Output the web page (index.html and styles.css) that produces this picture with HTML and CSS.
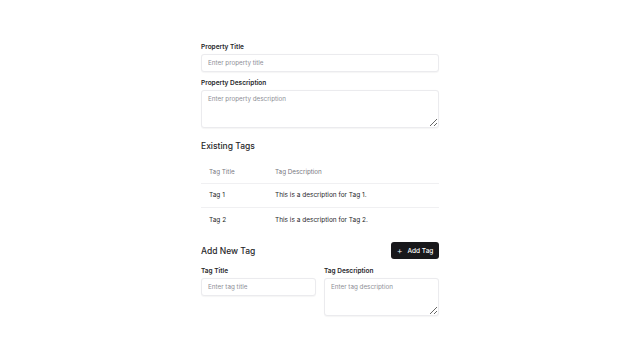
FILE: index.html
```html
<!DOCTYPE html>
<html lang="en">
<head>
<meta charset="utf-8">
<title>Property Form</title>
<link rel="stylesheet" href="styles.css">
</head>
<body>
<main class="form">
  <div class="field first">
    <label class="label">Property Title</label>
    <input class="input" type="text" placeholder="Enter property title">
  </div>
  <div class="field">
    <label class="label">Property Description</label>
    <textarea class="input area" placeholder="Enter property description"></textarea>
  </div>

  <h2 class="heading">Existing Tags</h2>
  <table class="tags">
    <thead>
      <tr><th class="c1">Tag Title</th><th>Tag Description</th></tr>
    </thead>
    <tbody>
      <tr><td class="c1">Tag 1</td><td>This is a description for Tag 1.</td></tr>
      <tr><td class="c1">Tag 2</td><td>This is a description for Tag 2.</td></tr>
    </tbody>
  </table>

  <div class="add-head">
    <h2 class="heading">Add New Tag</h2>
    <button class="btn"><span class="plus">+</span>Add Tag</button>
  </div>
  <div class="grid">
    <div class="field">
      <label class="label">Tag Title</label>
      <input class="input" type="text" placeholder="Enter tag title">
    </div>
    <div class="field">
      <label class="label">Tag Description</label>
      <textarea class="input area" placeholder="Enter tag description"></textarea>
    </div>
  </div>
</main>
</body>
</html>
```
FILE: styles.css
```css
* { box-sizing: border-box; }
html, body { margin: 0; padding: 0; background: #fff; }
body { font-family: Inter, "Noto Sans", sans-serif; color: #18181b; }

.form {
  width: 238px;
  margin: 0 auto;
  padding-top: 43px;
  display: flex;
  flex-direction: column;
}

.field { display: flex; flex-direction: column; gap: 3px; margin-bottom: 8px; }
.field.first { margin-bottom: 7px; }

.label { font-size: 6.5px; line-height: 8px; font-weight: 600; color: #27272a; }

.input {
  height: 18px;
  border: 1px solid #ebebee;
  border-radius: 3px;
  padding: 0 6px;
  font-family: inherit;
  font-size: 6.3px;
  color: #18181b;
  background: #fff;
  box-shadow: 0 0.5px 1px rgba(0,0,0,0.04);
  outline: none;
}
.input::placeholder { color: #8e8e96; }
.area { height: 38px; padding: 4px 6px; resize: vertical; line-height: 8px; }

.heading { margin: 0; font-size: 8.5px; line-height: 10px; font-weight: 500; color: #27272a; }
.form > .heading { margin-top: 5px; margin-bottom: 10px; }

.tags { width: 100%; border-collapse: collapse; font-size: 6.5px; }
.tags th, .tags td { text-align: left; padding: 0 8px; }
.tags th { font-weight: 400; font-size: 6.3px; color: #78787f; height: 22px; }
.tags td { height: 24.5px; color: #27272a; }
.tags .c1 { width: 66px; }
.tags thead tr, .tags tbody tr:first-child { border-bottom: 1px solid #f0f0f2; }

.add-head {
  display: flex;
  justify-content: space-between;
  align-items: center;
  margin-top: 10px;
  margin-bottom: 8px;
}
.btn {
  height: 17px;
  width: 48px;
  border: none;
  border-radius: 3px;
  background: #18181b;
  color: #fff;
  font-family: inherit;
  font-size: 6.5px;
  font-weight: 500;
  display: flex;
  align-items: center;
  justify-content: center;
  gap: 5px;
  padding: 0;
}
.plus { font-size: 9px; line-height: 8px; font-weight: 300; }

.grid { display: grid; grid-template-columns: 1fr 1fr; gap: 8px; align-items: start; }
```
